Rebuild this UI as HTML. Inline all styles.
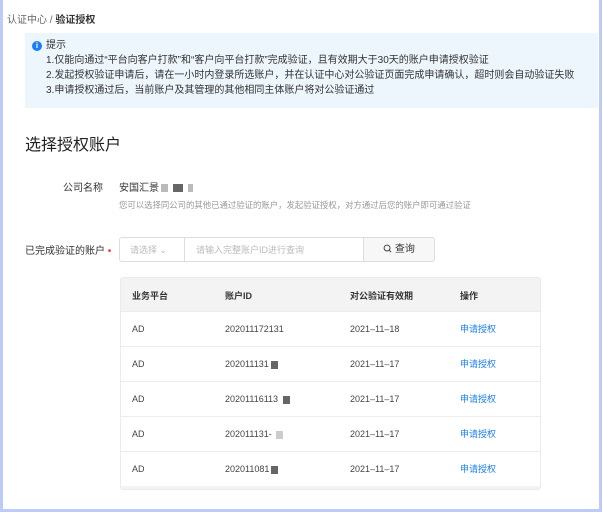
<!DOCTYPE html><html><head><meta charset="utf-8"><style>
*{margin:0;padding:0;box-sizing:border-box}
body{width:603px;height:515px;background:#fff;font-family:"Liberation Sans","Noto Sans CJK SC",sans-serif;color:#333;position:relative;overflow:hidden}
.frame{position:absolute;left:0;top:0;width:602px;height:512px;border:3px solid #bccbf7;border-top:none}
.a{position:absolute;white-space:nowrap}
.alert{position:absolute;left:25px;top:33px;width:573px;height:75px;background:#edf6fc}
.alert div{font-size:10px;color:#333;line-height:15px}
.tbl{position:absolute;left:120px;top:277px;width:421px;height:213px;border:1px solid #ebebeb;border-radius:3px;background:#f3f3f3}
.row{position:absolute;left:0;width:419px;height:35px;background:#fff;border-top:1px solid #ececec;font-size:9px;color:#444}
.row>span{position:absolute;top:12px;white-space:nowrap;line-height:11px}
.blk{display:inline-block;width:7px;height:8px;background:#666;vertical-align:middle;margin-left:2px}
</style></head><body>
<div class="frame"></div>
<div class="a" style="left:7px;top:11px;font-size:10px;color:#666">认证中心 / <b style="color:#333">验证授权</b></div>
<div class="alert">
<div class="a" style="left:7px;top:8px;width:10px;height:10px;border-radius:50%;background:#1a7ff0;color:#fff;font-size:8px;line-height:10px;text-align:center;font-weight:bold">i</div>
<div class="a" style="left:21px;top:5px">提示</div>
<div class="a" style="left:21px;top:20px">1.仅能向通过“平台向客户打款”和“客户向平台打款”完成验证，且有效期大于30天的账户申请授权验证</div>
<div class="a" style="left:21px;top:35px">2.发起授权验证申请后，请在一小时内登录所选账户，并在认证中心对公验证页面完成申请确认，超时则会自动验证失败</div>
<div class="a" style="left:21px;top:50px">3.申请授权通过后，当前账户及其管理的其他相同主体账户将对公验证通过</div>
</div>
<div class="a" style="left:25px;top:131px;font-size:16px;color:#222">选择授权账户</div>
<div class="a" style="left:63px;top:179px;font-size:10px;color:#333">公司名称</div>
<div class="a" style="left:119px;top:179px;font-size:10px;color:#333">安国汇景<span class="blk" style="background:#bbb"></span> <span class="blk" style="width:10px"></span> <span class="blk" style="background:#bbb;width:5px"></span></div>
<div class="a" style="left:119px;top:199px;font-size:8.4px;color:#999">您可以选择同公司的其他已通过验证的账户，发起验证授权，对方通过后您的账户即可通过验证</div>
<div class="a" style="left:25px;top:242px;font-size:10px;color:#333">已完成验证的账户 <span style="color:#e33">•</span></div>
<div class="a" style="left:119px;top:237px;width:316px;height:25px;border:1px solid #ddd;border-radius:3px"></div>
<div class="a" style="left:184px;top:237px;width:1px;height:25px;background:#ddd"></div>
<div class="a" style="left:363px;top:237px;width:72px;height:25px;background:#f7f7f7;border:1px solid #ddd;border-radius:0 3px 3px 0;font-size:10px;line-height:23px;text-align:center"><svg width="9" height="9" viewBox="0 0 10 10" style="vertical-align:-1px"><circle cx="4.5" cy="4.5" r="3.3" fill="none" stroke="#444" stroke-width="1.1"/><path d="M7 7l2 2" stroke="#444" stroke-width="1.1"/></svg> 查询</div>
<div class="a" style="left:130px;top:243px;font-size:9px;color:#bbb">请选择 ⌄</div>
<div class="a" style="left:196px;top:243px;font-size:9px;color:#bbb">请输入完整账户ID进行查询</div>
<div class="tbl">
<div style="position:absolute;left:0;top:0;width:419px;height:33px;font-size:9px;color:#333;font-weight:bold">
<span class="a" style="left:11px;top:11px">业务平台</span><span class="a" style="left:104px;top:11px">账户ID</span><span class="a" style="left:229px;top:11px">对公验证有效期</span><span class="a" style="left:339px;top:11px">操作</span></div>
<div class="row" style="top:33px"><span style="left:11px">AD</span><span style="left:104px">202011172131</span><span style="left:229px">2021–11–18</span><span style="left:339px;color:#1a7ff0">申请授权</span></div>
<div class="row" style="top:68px"><span style="left:11px">AD</span><span style="left:104px">202011131<span class="blk"></span></span><span style="left:229px">2021–11–17</span><span style="left:339px;color:#1a7ff0">申请授权</span></div>
<div class="row" style="top:103px"><span style="left:11px">AD</span><span style="left:104px">20201116113 <span class="blk"></span></span><span style="left:229px">2021–11–17</span><span style="left:339px;color:#1a7ff0">申请授权</span></div>
<div class="row" style="top:138px"><span style="left:11px">AD</span><span style="left:104px">202011131- <span class="blk" style="background:#ccc"></span></span><span style="left:229px">2021–11–17</span><span style="left:339px;color:#1a7ff0">申请授权</span></div>
<div class="row" style="top:173px"><span style="left:11px">AD</span><span style="left:104px">202011081<span class="blk"></span></span><span style="left:229px">2021–11–17</span><span style="left:339px;color:#1a7ff0">申请授权</span></div>
</div>
</body></html>
